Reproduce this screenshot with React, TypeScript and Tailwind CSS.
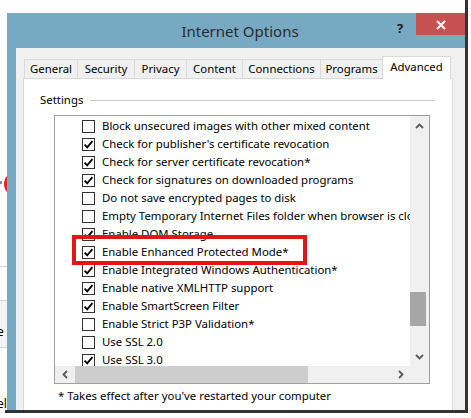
import React from "react";

const items: [string, boolean][] = [
  ["Block unsecured images with other mixed content", false],
  ["Check for publisher's certificate revocation", true],
  ["Check for server certificate revocation*", true],
  ["Check for signatures on downloaded programs", true],
  ["Do not save encrypted pages to disk", false],
  ["Empty Temporary Internet Files folder when browser is closed", false],
  ["Enable DOM Storage", true],
  ["Enable Enhanced Protected Mode*", true],
  ["Enable Integrated Windows Authentication*", true],
  ["Enable native XMLHTTP support", true],
  ["Enable SmartScreen Filter", true],
  ["Enable Strict P3P Validation*", false],
  ["Use SSL 2.0", false],
  ["Use SSL 3.0", true],
];

const tabs: [string, string][] = [
  ["General", "w-[54px]"],
  ["Security", "w-[57px]"],
  ["Privacy", "w-[52px]"],
  ["Content", "w-[56px]"],
  ["Connections", "w-[78px]"],
  ["Programs", "w-[62px]"],
];

function Check({ on }: { on: boolean }) {
  return (
    <div className="w-[13px] h-[13px] border border-[#333333] bg-white flex items-center justify-center shrink-0">
      {on && (
        <svg width="11" height="11" viewBox="0 0 11 11">
          <path d="M1.6 5.6 L4.2 8.3 L9.4 2.2" fill="none" stroke="#000" strokeWidth="1.9" />
        </svg>
      )}
    </div>
  );
}

function Chevron({ dir }: { dir: "up" | "down" | "left" | "right" }) {
  const d =
    dir === "up"
      ? "M1 6 L4.5 2.5 L8 6"
      : dir === "down"
      ? "M1 3 L4.5 6.5 L8 3"
      : dir === "left"
      ? "M6 1 L2.5 4.5 L6 8"
      : "M3 1 L6.5 4.5 L3 8";
  return (
    <svg width="9" height="9" viewBox="0 0 9 9">
      <path d={d} fill="none" stroke="#5a5a5a" strokeWidth="1.8" />
    </svg>
  );
}

export default function App() {
  return (
    <div className="relative w-[471px] h-[418px] bg-white overflow-hidden font-['Noto_Sans',sans-serif] text-black">
      {/* desktop behind */}
      <div className="absolute left-[4px] top-[172px] w-[24px] h-[24px] rounded-full bg-[#e02424]" />
      <div className="absolute left-0 top-[181px] w-[2px] h-[3px] bg-[#6a8fd0]" />
      <div className="absolute left-0 top-[266px] w-[10px] h-px bg-[#d4d4d4]" />
      <div className="absolute left-0 top-[300px] w-[10px] h-[48px] bg-[#f3f3f3] border-t border-b border-[#d4d4d4]" />
      <div className="absolute left-[-6px] top-[324px] text-[12px] leading-[16px]">le</div>
      <div className="absolute left-[-3px] top-[396px] text-[12px] leading-[16px]">el</div>

      {/* window */}
      <div className="absolute left-[7px] top-[13px] w-[458px] h-[397px] bg-[#78a9c2] flex flex-col z-10">
        <div className="h-[35px] flex items-start shrink-0">
          <div className="flex-1 pl-[89px] pt-[8px] text-center text-[15px] leading-[20px] text-[#2b2b2b]">
            Internet Options
          </div>
          <div className="w-[32px] pt-[6px] text-center text-[13px] leading-[18px] font-bold text-[#1a1a1a]">?</div>
          <div className="w-[49px] h-[22px] bg-[#c75050] flex items-center justify-center pt-[2px]">
            <svg width="10" height="10" viewBox="0 0 10 10">
              <path d="M1 1 L9 9 M9 1 L1 9" stroke="#fff" strokeWidth="2" />
            </svg>
          </div>
        </div>
        <div className="flex-1 ml-[9px] bg-[#f0f0f0] flex flex-col pl-[7px] pr-[12px] pt-[8px]">
          <div className="h-[22px] flex items-end pl-[1px] shrink-0">
            {tabs.map(([t, w], i) => (
              <div
                key={t}
                className={`${w} h-[19px] border-t border-r border-[#d9d9d9] bg-[#f0f0f0] text-[11.4px] leading-[18px] text-center ${
                  i === 0 ? "border-l" : ""
                }`}
              >
                {t}
              </div>
            ))}
            <div className="w-[69px] h-[23px] -mb-px -ml-px bg-white border border-b-0 border-[#d9d9d9] relative z-10 text-[11.4px] leading-[19px] text-center">
              Advanced
            </div>
          </div>
          <div className="flex-1 bg-white border border-b-0 border-[#d9d9d9] flex flex-col">
            <div className="flex items-center pl-[16px] mt-[13px] h-[16px]">
              <span className="text-[11.4px] leading-[16px]">Settings</span>
              <div className="flex-1 h-px bg-[#c8c8c8] ml-[7px] mr-[17px]" />
            </div>
            <div className="relative ml-[30px] mt-[7px] w-[376px] h-[269px] border border-[#a0a0a0] flex flex-col">
              <div className="h-[250px] flex">
                <div className="flex-1 overflow-hidden pt-[1px]">
                  {items.map(([t, on]) => (
                    <div key={t} className="h-[18px] flex items-center">
                      <div className="ml-[27px]">
                        <Check on={on} />
                      </div>
                      <span className="ml-[7px] whitespace-nowrap text-[11.4px] leading-[16px]">{t}</span>
                    </div>
                  ))}
                </div>
                <div className="w-[19px] bg-[#f0f0f0] flex flex-col">
                  <div className="h-[20px] flex items-center justify-center">
                    <Chevron dir="up" />
                  </div>
                  <div className="h-[156px]" />
                  <div className="h-[34px] w-[16px] bg-[#a6a6a6]" />
                  <div className="flex-1" />
                  <div className="h-[20px] flex items-center justify-center">
                    <Chevron dir="down" />
                  </div>
                </div>
              </div>
              <div className="h-[17px] bg-[#f0f0f0] flex">
                <div className="w-[20px] flex items-center justify-center">
                  <Chevron dir="left" />
                </div>
                <div className="w-[233px] bg-[#cdcdcd]" />
                <div className="flex-1" />
                <div className="w-[20px] flex items-center justify-center">
                  <Chevron dir="right" />
                </div>
                <div className="w-[19px]" />
              </div>
              <div className="absolute left-[17px] top-[119px] w-[235px] h-[30px] border-[4px] border-[#e4141c]" />
            </div>
            <div className="ml-[34px] mt-[4px] text-[11.4px] leading-[16px] whitespace-nowrap">
              * Takes effect after you've restarted your computer
            </div>
          </div>
        </div>
      </div>

      {/* screenshot shadow */}
      <div className="absolute left-[465px] top-0 w-[3px] h-[413px] bg-[#333333] z-20" />
      <div className="absolute left-[5px] top-[410px] w-[463px] h-[3px] bg-[#333333] z-20" />
    </div>
  );
}
